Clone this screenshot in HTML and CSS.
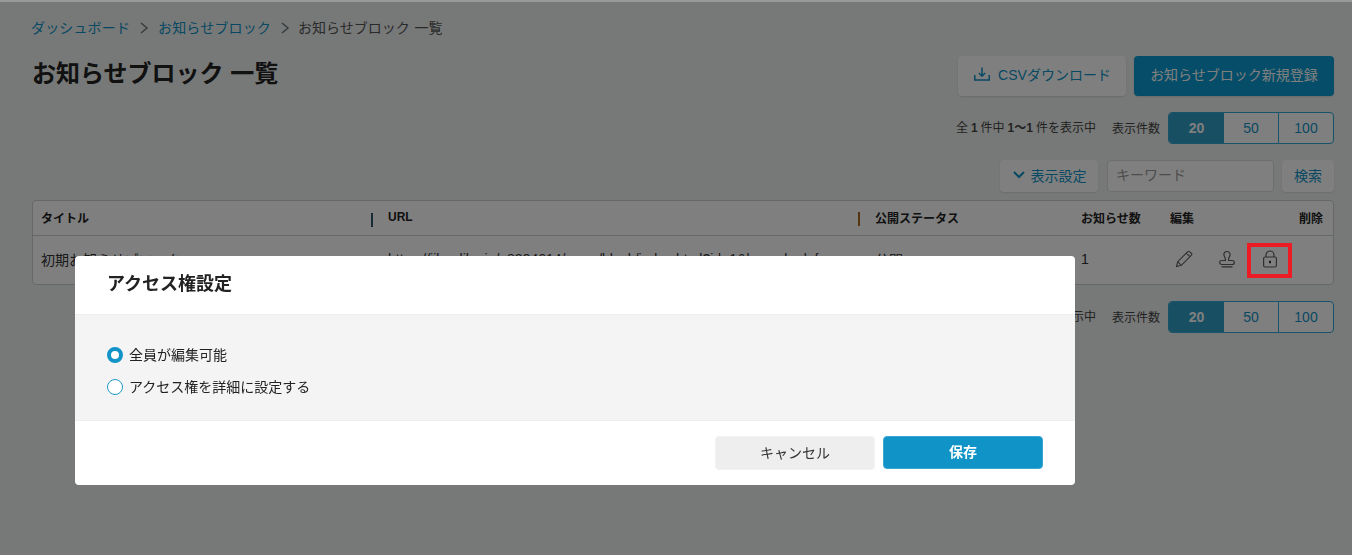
FILE: index.html
```html
<!DOCTYPE html>
<html lang="ja">
<head>
<meta charset="utf-8">
<title>お知らせブロック 一覧</title>
<link rel="stylesheet" href="styles.css">
</head>
<body>
<div class="page">
  <nav class="crumbs">
    <a class="crumb-link">ダッシュボード</a>
    <svg class="crumb-sep" width="10" height="14" viewBox="0 0 10 14"><path d="M2 2l6 5-6 5" fill="none" stroke="#6b7478" stroke-width="1.4"/></svg>
    <a class="crumb-link">お知らせブロック</a>
    <svg class="crumb-sep" width="10" height="14" viewBox="0 0 10 14"><path d="M2 2l6 5-6 5" fill="none" stroke="#6b7478" stroke-width="1.4"/></svg>
    <span class="crumb-current">お知らせブロック 一覧</span>
  </nav>

  <div class="title-row">
    <h1 class="title">お知らせブロック 一覧</h1>
    <div class="actions">
      <button class="btn btn-light btn-csv">
        <svg class="btn-icon" width="18" height="18" viewBox="0 0 18 18" fill="none" stroke="#0f93c6" stroke-width="1.5"><path d="M9 2.500v8.500M5.800 8l3.200 3.200L12.200 8M1.800 10v5h14.400v-5"/></svg>
        CSVダウンロード
      </button>
      <button class="btn btn-primary">お知らせブロック新規登録</button>
    </div>
  </div>

  <div class="pager-row">
    <span class="count">全<b>1</b>件中<b>1〜1</b>件を表示中</span>
    <span class="per-label">表示件数</span>
    <div class="pager">
      <span class="page-item page-active">20</span>
      <span class="page-item">50</span>
      <span class="page-item page-last">100</span>
    </div>
  </div>

  <div class="search-row">
    <button class="btn-small btn-setting">
      <svg class="btn-icon" width="14" height="10" viewBox="0 0 14 10" fill="none" stroke="#0f93c6" stroke-width="2"><path d="M2 2l5 5 5-5"/></svg>
      表示設定
    </button>
    <div class="keyword">キーワード</div>
    <button class="btn-small btn-search">検索</button>
  </div>

  <div class="table">
    <div class="tr th">
      <div class="c-title">タイトル</div>
      <div class="c-url"><i class="bar"></i>URL</div>
      <div class="c-status"><i class="bar"></i>公開ステータス</div>
      <div class="c-num">お知らせ数</div>
      <div class="c-edit">編集</div>
      <div class="c-del">削除</div>
    </div>
    <div class="tr td">
      <div class="c-title">初期お知らせブロック</div>
      <div class="c-url">https://jibunlike.jp/a8394614/news/block/index.html?id=1&amp;key=abcdef</div>
      <div class="c-status">公開</div>
      <div class="c-num">1</div>
      <div class="c-icons">
        <svg width="20" height="20" viewBox="0 0 20 20" fill="none" stroke="#5a5f60" stroke-width="1.100"><path d="M2.500 17.500l1.200-4.800L13.800 2.600a1.200 1.200 0 0 1 1.700 0l2 1.900a1.200 1.200 0 0 1 0 1.700L7.400 16.300zM3.700 12.700l3.700 3.600M12.300 4.100l3.700 3.600"/></svg>
        <svg width="20" height="20" viewBox="0 0 20 20" fill="none" stroke="#5a5f60" stroke-width="1.200"><path d="M8.400 10c0-1.700-1.500-2.300-1.500-4.400a3.100 3.100 0 0 1 6.200 0c0 2.100-1.500 2.700-1.500 4.400v1.500h3.700a2 2 0 0 1 0 4H4.700a2 2 0 0 1 0-4h3.700zM4.500 17.800h11"/></svg>
        <svg width="20" height="20" viewBox="0 0 20 20" fill="none" stroke="#5a5f60" stroke-width="1.200"><rect x="3.600" y="8" width="12.800" height="10" rx="1.500"/><path d="M6 8V6a4 4 0 0 1 8 0v2"/><rect x="9" y="11.800" width="2" height="2.400" fill="#333" stroke="none"/></svg>
      </div>
    </div>
  </div>

  <div class="pager-row pager-bottom">
    <span class="count">全<b>1</b>件中<b>1〜1</b>件を表示中</span>
    <span class="per-label">表示件数</span>
    <div class="pager">
      <span class="page-item page-active">20</span>
      <span class="page-item">50</span>
      <span class="page-item page-last">100</span>
    </div>
  </div>
</div>

<div class="overlay"></div>

<div class="modal">
  <div class="modal-head">アクセス権設定</div>
  <div class="modal-body">
    <div class="radio-line"><span class="radio radio-on"></span>全員が編集可能</div>
    <div class="radio-line"><span class="radio"></span>アクセス権を詳細に設定する</div>
  </div>
  <div class="modal-foot">
    <button class="m-btn m-cancel">キャンセル</button>
    <button class="m-btn m-save">保存</button>
  </div>
</div>

<div class="mark"></div>
</body>
</html>
```
FILE: styles.css
```css
* { box-sizing: border-box; }
html, body { margin: 0; padding: 0; height: 100%; overflow: hidden; }
body {
  background: #eff2f1;
  color: #333;
  font-family: "Liberation Sans", "Noto Sans CJK JP", sans-serif;
  font-size: 14px;
  position: relative;
}
button { font-family: inherit; cursor: pointer; }

.page { padding: 18px 18px 0 32px; }

.crumbs { display: flex; align-items: center; height: 20px; line-height: 20px; font-size: 14px; margin-left: -1px; }
.crumb-link { color: #0f93c6; letter-spacing: .15px; }
.crumb-current { color: #555; word-spacing: 1px; margin-left: -1px; }
.crumb-sep { margin: 0 9px 0 9px; }

.title-row { display: flex; justify-content: space-between; margin-top: 18px; height: 40px; }
.title { margin: 0; font-size: 24px; line-height: 36px; font-weight: 700; color: #222; }
.actions { display: flex; gap: 8px; }

.btn {
  display: flex; align-items: center; justify-content: center; gap: 7px;
  height: 40px; border: 0; border-radius: 4px; font-size: 14px; padding: 0 0 4px;
  box-shadow: 0 1px 2px rgba(0,0,0,.12);
}
.btn-icon { flex: none; }
.btn-light { width: 168px; background: #fff; color: #0f93c6; }
.btn-primary { width: 200px; background: #0a9ad0; color: #fff; }

.pager-row { display: flex; justify-content: flex-end; align-items: center; margin-top: 16px; height: 32px; font-size: 12px; color: #444; }
.pager-bottom { margin-top: 16px; }
.count { margin-top: -3px; }
.count b { margin: 0 3px; }
.per-label { margin-left: 16px; margin-right: 8px; margin-top: -2px; }
.pager {
  display: flex; width: 166px; height: 32px; border: 1px solid #2ea7d4; border-radius: 4px; overflow: hidden;
  background: #fff; font-size: 14px; color: #0f93c6;
}
.page-item { flex: 0 0 55px; display: flex; align-items: center; justify-content: center; border-right: 1px solid #2ea7d4; }
.page-active { background: #339fc6; color: #fff; font-weight: 700; border-right: 0; }
.page-last { flex: 1; border-right: 0; }

.search-row { display: flex; justify-content: flex-end; margin-top: 16px; height: 32px; }
.btn-small {
  height: 32px; border: 0; border-radius: 4px; background: #fff; color: #0f93c6; font-size: 14px; padding: 0 0 3px;
  display: flex; align-items: center; justify-content: center; gap: 5px;
  box-shadow: 0 1px 2px rgba(0,0,0,.1);
}
.btn-setting { width: 98px; }
.btn-search { width: 52px; margin-left: 8px; }
.keyword {
  width: 167px; margin-left: 9px; height: 32px; line-height: 28px; padding-left: 8px;
  background: #fff; border: 1px solid #ddd; border-radius: 4px; color: #999; font-size: 14px;
}

.table { margin-top: 8px; height: 85px; background: #fff; border: 1px solid #ccd0d0; border-radius: 4px; }
.tr { display: flex; align-items: center; position: relative; }
.th { height: 35px; border-bottom: 1px solid #ccd0d0; font-size: 12px; font-weight: 700; color: #222; padding-bottom: 2px; }
.td { height: 48px; font-size: 14px; color: #333; white-space: nowrap; padding-bottom: 2px; }
.c-title { width: 338px; padding-left: 8px; flex: none; }
.c-url { width: 487px; padding-left: 17px; flex: none; position: relative; }
.c-status { width: 223px; padding-left: 17px; flex: none; position: relative; }
.c-num { width: 89px; flex: none; }
.c-edit { width: 60px; flex: none; }
.c-del { width: 103px; flex: none; text-align: right; padding-right: 10px; }
.bar { position: absolute; left: 0; top: 3px; width: 2px; height: 14px; background: #2c5a70; }
.th .c-status .bar { background: #a86a20; }
.c-icons { display: flex; gap: 23px; padding-left: 4px; flex: none; }
.c-icons svg { display: block; }

.overlay { position: fixed; inset: 0; background: rgba(0,0,0,.5); }
.overlay::before { content: ""; position: absolute; left: 0; right: 0; top: 0; height: 2px; background: #999; }

.modal {
  position: absolute; left: 75px; top: 256px; width: 1000px; height: 229px;
  background: #fff; border-radius: 4px; overflow: hidden; display: flex; flex-direction: column;
}
.modal-head { height: 59px; flex: none; border-bottom: 1px solid #eee; padding-left: 32px; line-height: 57px; font-size: 18px; font-weight: 700; color: #222; }
.modal-body { height: 106px; flex: none; background: #f4f4f4; border-bottom: 1px solid #eee; padding: 23px 32px 0; font-size: 14px; color: #222; }
.radio-line { display: flex; align-items: center; height: 32px; }
.radio { width: 16px; height: 16px; border: 1px solid #1d9bcb; border-radius: 50%; background: #fff; margin: 2px 6px 0 0; flex: none; }
.radio-on { border: 4px solid #1093c7; }
.modal-foot { flex: 1; display: flex; justify-content: flex-end; gap: 8px; padding: 15px 32px 0 0; }
.m-btn { width: 160px; height: 34px; border-radius: 4px; font-size: 14px; padding: 0 0 3px; }
.m-cancel { background: #eee; border: 1px solid #f2f2f2; color: #333; }
.m-save { height: 33px; background: #1093c7; border: 1px solid #3aa7d2; color: #fff; font-weight: 700; }

.mark { position: absolute; left: 1247px; top: 243px; width: 45px; height: 35px; border: 4px solid #ed1c24; }
```
